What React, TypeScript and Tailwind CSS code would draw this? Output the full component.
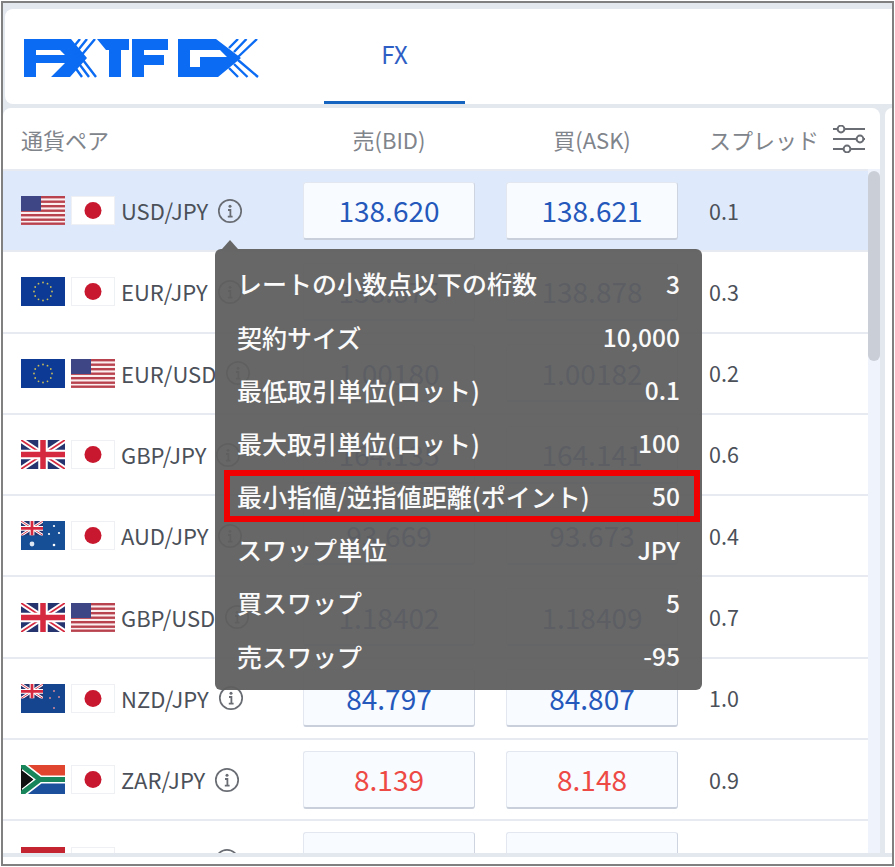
import React from "react";

const font = { fontFamily: '"Noto Sans CJK JP", "Noto Sans", sans-serif' };

type FlagCode = "US" | "JP" | "EU" | "GB" | "AU" | "NZ" | "ZA" | "CH";

function UnionJack({ w = 44, h = 29 }: { w?: number; h?: number }) {
  return (
    <svg x="0" y="0" width={w} height={h} viewBox="0 0 44 29" preserveAspectRatio="none">
      <rect width="44" height="29" fill="#25336e" />
      <path d="M0 0L44 29M44 0L0 29" stroke="#fff" strokeWidth="5.5" />
      <path d="M0 0L44 29M44 0L0 29" stroke="#d5293f" strokeWidth="1.8" />
      <path d="M22 0V29M0 14.5H44" stroke="#fff" strokeWidth="9.5" />
      <path d="M22 0V29M0 14.5H44" stroke="#d5293f" strokeWidth="5.5" />
    </svg>
  );
}

function Flag({ code }: { code: FlagCode }) {
  const stars = Array.from({ length: 12 }, (_, i) => {
    const a = (i * Math.PI) / 6;
    return { x: 22 + 9 * Math.cos(a), y: 14.5 + 9 * Math.sin(a) };
  });
  return (
    <svg width="44" height="29" viewBox="0 0 44 29" className="shrink-0">
      {code === "US" && (
        <>
          <rect width="44" height="29" fill="#fbeff0" />
          {[0, 4.5, 9, 13.5, 18, 22.5, 26.5].map((y) => (
            <rect key={y} y={y} width="44" height="2.4" fill="#b8434f" />
          ))}
          <rect width="20" height="15" fill="#3f4685" />
        </>
      )}
      {code === "JP" && (
        <>
          <rect x="0.5" y="0.5" width="43" height="28" fill="#fff" stroke="#eef0f3" />
          <circle cx="22" cy="14.5" r="8.5" fill="#c8182f" />
        </>
      )}
      {code === "EU" && (
        <>
          <rect width="44" height="29" fill="#0c3a94" />
          {stars.map((s, i) => (
            <circle key={i} cx={s.x} cy={s.y} r="0.9" fill="#c9bd5a" />
          ))}
        </>
      )}
      {code === "GB" && <UnionJack />}
      {(code === "AU" || code === "NZ") && (
        <>
          <rect width="44" height="29" fill={code === "AU" ? "#174f96" : "#15458f"} />
          <UnionJack w={22} h={14.5} />
          {code === "AU" ? (
            <>
              <circle cx="11" cy="23" r="2.4" fill="#dfe8f2" />
              <circle cx="33" cy="5" r="1.1" fill="#fff" />
              <circle cx="38" cy="12" r="1.1" fill="#fff" />
              <circle cx="28" cy="13" r="1.1" fill="#fff" />
              <circle cx="33" cy="24" r="1.3" fill="#fff" />
            </>
          ) : (
            <>
              <circle cx="33" cy="7" r="1" fill="#d98a98" />
              <circle cx="38" cy="13" r="1" fill="#d98a98" />
              <circle cx="29" cy="14" r="1" fill="#d98a98" />
              <circle cx="33" cy="24" r="1" fill="#d98a98" />
            </>
          )}
        </>
      )}
      {code === "ZA" && (
        <>
          <rect width="44" height="14.5" fill="#e0452f" />
          <rect y="14.5" width="44" height="14.5" fill="#1c4f9c" />
          <path d="M0 0L18 14.5L0 29Z" fill="#111" />
          <path d="M0 -1L19 14.5L0 30" fill="none" stroke="#f2c230" strokeWidth="2" transform="translate(-2 0)" />
          <path d="M0 2L16 14.5H44M16 14.5L0 27" fill="none" stroke="#fff" strokeWidth="8" transform="translate(3 0)" />
          <path d="M0 0L19 14.5H44M19 14.5L0 29" fill="none" stroke="#18855a" strokeWidth="5" />
          <path d="M0 5L12 14.5L0 24Z" fill="#111" />
        </>
      )}
      {code === "CH" && <rect width="44" height="29" fill="#c4242f" />}
    </svg>
  );
}

function InfoIcon({ className = "" }: { className?: string }) {
  return (
    <svg width="26" height="26" viewBox="0 0 26 26" fill="none" className={"shrink-0 " + className}>
      <circle cx="13" cy="13" r="11.2" stroke="#696d73" strokeWidth="1.7" />
      <circle cx="13" cy="8.2" r="1.5" fill="#696d73" />
      <path d="M11 12H13.4V18.4M10.8 18.6H15.6" stroke="#696d73" strokeWidth="1.8" />
    </svg>
  );
}

function Logo() {
  const c = "#0b6bf2";
  return (
    <svg width="236" height="39" viewBox="0 0 236 39" className="shrink-0" role="img" aria-label="FXTF GX">
      <g fill={c}>
        {/* FX ligature */}
        <path d="M0 0H47L63 19L46 38H27L41 24H12V38H0V0ZM12 11V16H41L36 11Z" fillRule="evenodd" />
        {/* T */}
        <path d="M73 0H105V11H97V38H85V11H82Z" />
        {/* F */}
        <path d="M108 0H144V11H120V16H140V26H120V38H108V0Z" />
        {/* G with chevron */}
        <path d="M154 0H192L217 19L194 38H154V0ZM166 11V28H176V18H203L196 11Z" fillRule="evenodd" />
      </g>
      {/* rungs of the X */}
      <g stroke={c} strokeWidth="2.4" fill="none">
        <path d="M47 11L56 0M51 15L63 0M56 18L71 0" />
        <path d="M50 27L58 38M54.5 24L65 38M59 21L72 38" />
        <path d="M205 9L214 0M210 13L222.5 0M214 18L233 0" />
        <path d="M205 29L214 38M210 25L223.5 38M214 21L234 38" />
      </g>
    </svg>
  );
}

function FilterIcon() {
  return (
    <svg width="34" height="28" viewBox="0 0 34 28" fill="none" className="shrink-0">
      <path d="M1 4H33M1 14H33M1 24H33" stroke="#6a6e74" strokeWidth="2" />
      <circle cx="9" cy="4" r="3.4" fill="#fff" stroke="#6a6e74" strokeWidth="2" />
      <circle cx="28" cy="14" r="3.4" fill="#fff" stroke="#6a6e74" strokeWidth="2" />
      <circle cx="15" cy="24" r="3.4" fill="#fff" stroke="#6a6e74" strokeWidth="2" />
    </svg>
  );
}

const rows: { a: FlagCode; b: FlagCode; pair: string; bid: string; ask: string; spread: string; down?: boolean }[] = [
  { a: "US", b: "JP", pair: "USD/JPY", bid: "138.620", ask: "138.621", spread: "0.1" },
  { a: "EU", b: "JP", pair: "EUR/JPY", bid: "138.875", ask: "138.878", spread: "0.3" },
  { a: "EU", b: "US", pair: "EUR/USD", bid: "1.00180", ask: "1.00182", spread: "0.2" },
  { a: "GB", b: "JP", pair: "GBP/JPY", bid: "164.135", ask: "164.141", spread: "0.6" },
  { a: "AU", b: "JP", pair: "AUD/JPY", bid: "93.669", ask: "93.673", spread: "0.4" },
  { a: "GB", b: "US", pair: "GBP/USD", bid: "1.18402", ask: "1.18409", spread: "0.7" },
  { a: "NZ", b: "JP", pair: "NZD/JPY", bid: "84.797", ask: "84.807", spread: "1.0" },
  { a: "ZA", b: "JP", pair: "ZAR/JPY", bid: "8.139", ask: "8.148", spread: "0.9", down: true },
  { a: "CH", b: "JP", pair: "CHF/JPY", bid: "", ask: "", spread: "" },
];

const details = [
  ["レートの小数点以下の桁数", "3"],
  ["契約サイズ", "10,000"],
  ["最低取引単位(ロット)", "0.1"],
  ["最大取引単位(ロット)", "100"],
  ["最小指値/逆指値距離(ポイント)", "50"],
  ["スワップ単位", "JPY"],
  ["買スワップ", "5"],
  ["売スワップ", "-95"],
];

function Price({ value, down }: { value: string; down?: boolean }) {
  return (
    <div
      className={
        "flex h-[58px] w-[172px] shrink-0 items-center justify-center rounded-[3px] border border-[#e2e7f0] border-r-[#cfd5e0] border-b-2 border-b-[#c9d0dc] bg-[#f8fbff] text-[28px] " +
        (down ? "text-[#ee4a45]" : "text-[#2558bb]")
      }
    >
      {value}
    </div>
  );
}

export default function App() {
  return (
    <div className="relative h-[867px] w-[895px] overflow-hidden bg-white p-[1px]" style={font}>
      <div className="flex h-full flex-col border-2 border-[#808080] bg-[#e3e8ef] pt-[6px]">
        {/* top bar */}
        <div className="ml-[2px] flex h-[95px] shrink-0 items-center rounded-l-lg bg-white pl-[19px]">
          <div className="mt-[3px]">
            <Logo />
          </div>
          <div className="ml-[64px] flex h-full w-[141px] items-center justify-center border-b-[3px] border-[#1565c0] pb-[3px] text-[24px] text-[#2e5ec4]">
            FX
          </div>
        </div>

        <div className="mt-[4px] flex h-[745px] shrink-0">
          {/* rate table */}
          <div className="flex w-[877px] shrink-0 flex-col overflow-hidden rounded-t-lg bg-white">
            <div className="flex h-[61px] shrink-0 items-center pt-[1px] text-[22px] text-[#80848b]">
              <div className="w-[300px] shrink-0 pl-[18px]">通貨ペア</div>
              <div className="w-[172px] shrink-0 text-center">売(BID)</div>
              <div className="ml-[31px] w-[172px] shrink-0 text-center">買(ASK)</div>
              <div className="ml-[31px] shrink-0">スプレッド</div>
              <div className="ml-[13px]">
                <FilterIcon />
              </div>
            </div>
            <div className="flex min-h-0 flex-1">
              <div className="min-w-0 flex-1 overflow-hidden">
                {rows.map((r, i) => (
                  <div
                    key={r.pair}
                    className={
                      "flex h-[81.3px] items-center border-t-2 border-[#e7eaf0] " + (i === 0 ? "bg-[#deeafb]" : "bg-white")
                    }
                  >
                    <div className="flex w-[300px] shrink-0 items-center pl-[18px]">
                      <Flag code={r.a} />
                      <div className="ml-[6px]">
                        <Flag code={r.b} />
                      </div>
                      <span className="ml-[6px] text-[22px] text-[#4b5059]">{r.pair}</span>
                      <InfoIcon className="ml-[9px]" />
                    </div>
                    <Price value={r.bid} down={r.down} />
                    <div className="ml-[31px]">
                      <Price value={r.ask} down={r.down} />
                    </div>
                    <div className="ml-[31px] text-[21.5px] text-[#4b5059]">{r.spread}</div>
                  </div>
                ))}
              </div>
              {/* scrollbar */}
              <div className="w-[12px] shrink-0 bg-[#eff3fb] pt-[2px]">
                <div className="h-[190px] rounded-full bg-[#c9ced7]" />
              </div>
            </div>
          </div>
          <div className="ml-[5px] flex-1 rounded-tl-lg bg-white" />
        </div>

        <div className="mt-[4px] flex-1 bg-white" />
      </div>

      {/* symbol detail tooltip */}
      <div className="absolute left-[215px] top-[249px] h-[441px] w-[487px] rounded-md bg-[#5f5f5f]/95 px-[22px] pt-[8.5px] text-[#fafafa]">
        <div className="absolute -top-[9px] left-[7px] h-0 w-0 border-x-[8px] border-b-[9px] border-x-transparent border-b-[#666666]" />
        {details.map(([label, value]) => (
          <div key={label} className="flex h-[53.2px] items-center justify-between font-medium">
            <span className="text-[25px]">{label}</span>
            <span className="text-[24.5px]">{value}</span>
          </div>
        ))}
        <div className="absolute left-[9px] top-[221px] h-[52px] w-[476px] border-[6px] border-[#f00000]" />
      </div>
    </div>
  );
}
